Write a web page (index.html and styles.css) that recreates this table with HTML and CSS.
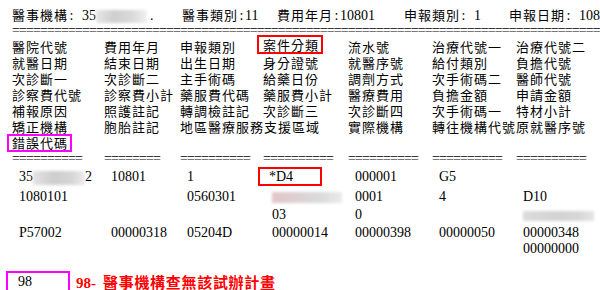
FILE: index.html
```html
<!DOCTYPE html>
<html lang="zh-Hant">
<head>
<meta charset="utf-8">
<title>醫事資料</title>
<link rel="stylesheet" href="styles.css">
</head>
<body>
<div class="page">
  <div class="head">
    <span class="hcell"><span class="zh">醫事機構</span><span class="colon">:</span><span class="gap">35<span class="blur b-head"></span>.</span></span>
    <span class="hcell"><span class="zh">醫事類別</span><span class="colon">:</span>11</span>
    <span class="hcell"><span class="zh">費用年月</span><span class="colon">:</span>10801</span>
    <span class="hcell"><span class="zh">申報類別</span><span class="colon">:</span><span class="gap">1</span></span>
    <span class="hcell"><span class="zh">申報日期</span><span class="colon">:</span><span class="gap">108</span></span>
  </div>
  <div class="rule">==========================================================================================</div>

  <div class="grid labels">
    <span>醫院代號</span><span>費用年月</span><span>申報類別</span><span class="box box-red box-lbl">案件分類</span><span>流水號</span><span>治療代號一</span><span>治療代號二</span>
    <span>就醫日期</span><span>結束日期</span><span>出生日期</span><span>身分證號</span><span>就醫序號</span><span>給付類別</span><span>負擔代號</span>
    <span>次診斷一</span><span>次診斷二</span><span>主手術碼</span><span>給藥日份</span><span>調劑方式</span><span>次手術碼二</span><span>醫師代號</span>
    <span>診察費代號</span><span>診察費小計</span><span>藥服費代碼</span><span>藥服費小計</span><span>醫療費用</span><span>負擔金額</span><span>申請金額</span>
    <span>補報原因</span><span>照護註記</span><span>轉調檢註記</span><span>次診斷三</span><span>次診斷四</span><span>次手術碼一</span><span>特材小計</span>
    <span>矯正機構</span><span>胞胎註記</span><span class="span2">地區醫療服務支援區域</span><span>實際機構</span><span>轉往機構代號</span><span>原就醫序號</span>
    <span class="box box-mag box-err">錯誤代碼</span>
  </div>

  <div class="grid seps">
    <span>==========</span><span>========</span><span>==========</span><span>==========</span><span>==========</span><span>==========</span><span>==========</span>
  </div>

  <div class="grid data">
    <span>35<span class="blur b-id"></span>2</span><span>10801</span><span>1</span><span class="box box-red box-dat">*D4</span><span>000001</span><span>G5</span><span></span>
    <span>1080101</span><span></span><span>0560301</span><span><span class="blur b-pink"></span></span><span>0001</span><span>4</span><span>D10</span>
    <span></span><span></span><span></span><span>03</span><span>0</span><span></span><span><span class="blur b-gray"></span></span>
    <span>P57002</span><span>00000318</span><span>05204D</span><span>00000014</span><span>00000398</span><span>00000050</span><span>00000348</span>
    <span></span><span></span><span></span><span></span><span></span><span></span><span>00000000</span>
  </div>

  <div class="footer">
    <div class="errbox">98</div>
    <div class="msg">98-<span class="msg-zh">醫事機構查無該試辦計畫</span></div>
  </div>
</div>
</body>
</html>
```

FILE: styles.css
```css
html, body {
  margin: 0;
  padding: 0;
  background: #fff;
}
body {
  width: 600px;
  height: 290px;
  overflow: hidden;
  font-family: "Liberation Serif", "Noto Sans CJK TC", serif;
  font-size: 14px;
  color: #000;
}
.page {
  padding: 7px 0 0 12px;
}
.zh {
  font-family: "Noto Sans CJK TC", sans-serif;
  font-size: 13px;
  letter-spacing: 1px;
}
.head {
  display: grid;
  grid-template-columns: 170px 95px 127px 105px 1fr;
  height: 16px;
  line-height: 16px;
  white-space: nowrap;
}
.colon {
  display: inline-block;
  width: 7px;
  text-align: center;
}
.gap {
  margin-left: 7px;
}
.rule {
  height: 16px;
  line-height: 16px;
  white-space: nowrap;
  letter-spacing: -0.9px;
  overflow: hidden;
}
.grid {
  display: grid;
  grid-template-columns: 92px 76px 83px 85px 84px 84px 1fr;
  white-space: nowrap;
}
.labels {
  grid-auto-rows: 16px;
  line-height: 16px;
  font-family: "Noto Sans CJK TC", sans-serif;
  font-size: 13px;
  letter-spacing: 1px;
}
.labels .span2 {
  grid-column: span 2;
}
.seps {
  grid-auto-rows: 16px;
  line-height: 16px;
  letter-spacing: -0.9px;
}
.data {
  grid-template-rows: 20px 20px 16px 19px 14px;
  line-height: 16px;
  align-items: center;
}
.data > span {
  padding-left: 7px;
}
.data > span:nth-child(7n+4) {
  padding-left: 9px;
}
.box {
  box-sizing: border-box;
  border: 2px solid;
  justify-self: start;
  align-self: start;
}
.box-red {
  border-color: #ff0000;
}
.box-mag {
  border-color: #ff00ff;
}
.box-lbl {
  width: 66px;
  height: 19px;
  margin: -4px 0 0 -6px;
  padding-left: 4px;
  line-height: 15px;
}
.box-err {
  width: 65px;
  height: 18px;
  margin: -1px 0 0 -5px;
  padding-left: 3px;
  line-height: 14px;
}
.data > .box-dat {
  width: 64px;
  height: 19px;
  margin-left: -5px;
  padding-left: 5px;
  line-height: 15px;
  align-self: start;
}
.blur {
  display: inline-block;
  vertical-align: middle;
  filter: blur(1.5px);
}
.b-head {
  width: 51px;
  height: 13px;
  margin-right: 3px;
  background: linear-gradient(90deg, #e6e6e6, #cfcfcf 35%, #d9d9d9 70%, #f0f0f0);
}
.b-id {
  width: 52px;
  height: 14px;
  background: linear-gradient(90deg, #e2e2e2, #cdcdcd 40%, #d6d6d6 75%, #ececec);
}
.b-pink {
  width: 70px;
  height: 11px;
  background: linear-gradient(90deg, #e3c4c8, #dcd0d2 35%, #dadada 70%, #ebebeb);
}
.b-gray {
  width: 71px;
  height: 10px;
  background: linear-gradient(90deg, #dcdcdc, #d2d2d2 50%, #d8d8d8 80%, #e4e4e4);
}
.footer {
  display: flex;
  align-items: center;
  margin-top: 15px;
}
.errbox {
  box-sizing: border-box;
  width: 64px;
  height: 22px;
  margin-left: -6px;
  padding-left: 10px;
  border: 2px solid #ff00ff;
  line-height: 18px;
}
.msg {
  margin-left: 6px;
  color: #ff0000;
  font-weight: bold;
  font-size: 15px;
  line-height: 18px;
  white-space: nowrap;
}
.msg-zh {
  margin-left: 7px;
  font-family: "Noto Sans CJK TC", sans-serif;
  font-size: 15px;
  letter-spacing: 0.7px;
}
```
